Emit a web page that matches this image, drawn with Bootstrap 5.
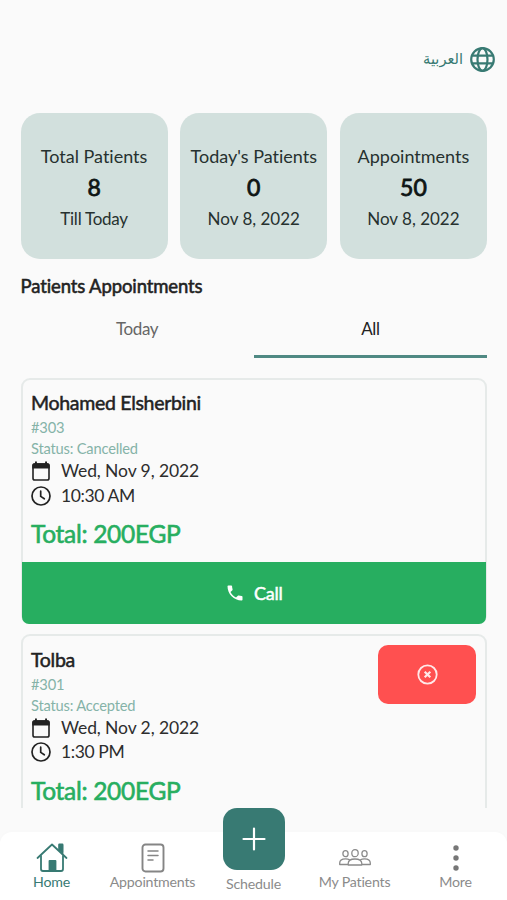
<!DOCTYPE html>
<html lang="en">
<head>
<meta charset="utf-8">
<meta name="viewport" content="width=device-width, initial-scale=1">
<title>Patients Appointments</title>
<link href="https://cdn.jsdelivr.net/npm/bootstrap@5.3.0/dist/css/bootstrap.min.css" rel="stylesheet">
<style>
:root{--teal:#387a73;--green:#27ae60;--mist:#d2e0dd}
body{font-family:Lato,"Liberation Sans",sans-serif;font-variant-ligatures:none;background:#fafafa;color:#222;height:900px;overflow:hidden}
.app-main{height:808px;padding:0 20px 0 20.5px}
.topbar{height:113.4px;padding-top:5px;margin-right:-8px;gap:7px}
.lang{font-family:"DejaVu Sans",sans-serif;font-size:14.6px;color:var(--teal);line-height:26px}
.stats{gap:12.5px}
.stat{background:var(--mist);border-radius:19px;height:146px;padding-top:27.5px;flex:1 1 0;white-space:nowrap}
.stat-name{font-size:18px;line-height:31px;color:#26312f}
.stat-num{font-size:23px;line-height:31px;font-weight:400;color:#0e1514;-webkit-text-stroke:.8px}
.stat-note{font-size:17px;line-height:31px;color:#26312f}
.stat-note.till{letter-spacing:-.25px}
.section-title{font-size:18.5px;line-height:28px;margin:13px 0 0;font-weight:400;letter-spacing:-.12px;-webkit-text-stroke:.55px}
.tab{height:58px;padding-top:14.5px;font-size:17px;line-height:28px;color:#666;letter-spacing:-.4px}
.tab.on{color:#222;border-bottom:3px solid #4f8983}
.appt{border:2px solid #e6eae9;border-radius:9px;white-space:nowrap}
.appt-body{padding:10.5px 10px 0 8.5px;height:182.5px}
.pname{font-size:19.5px;line-height:26px;letter-spacing:-.3px;-webkit-text-stroke:.5px;margin-bottom:.8px}
.meta{font-size:14.7px;line-height:21px;letter-spacing:-.2px;color:#85b3a8}
.when{font-size:17.5px;line-height:24.5px;height:24.5px;color:#2d2d2d;gap:10px;letter-spacing:-.1px}
.clock-time{letter-spacing:-.4px}
.total{font-size:24.5px;line-height:36px;letter-spacing:-.3px;color:var(--green);-webkit-text-stroke:.6px;margin-top:8px}
.call{background:var(--green);color:#fff;height:61.5px;border-radius:0 0 7px 7px;font-size:18px;gap:9px;-webkit-text-stroke:.5px;margin:0 -1px -1.5px;letter-spacing:-.2px}
.cancel{width:98px;height:58.5px;border-radius:10px;background:#ff5050;border:0;right:9px;top:9px}
.dock{height:68px;margin-top:24px;background:#fff;border-radius:12px 12px 0 0;box-shadow:0 -1px 5px rgba(0,0,0,.012);padding-left:1px}
.dock-item{width:101px;color:#8b8b8b;font-size:14.2px;line-height:20px;padding-top:7.7px;white-space:nowrap;letter-spacing:-.2px}
.dock-icon{height:32px}
.fab{width:62px;height:62px;border-radius:14px;background:var(--teal);top:-24px;left:50%;margin-left:-30.5px}
</style>
<script src="https://cdn.jsdelivr.net/npm/bootstrap@5.3.0/dist/js/bootstrap.bundle.min.js"></script>
</head>
<body>
<svg width="0" height="0" class="position-absolute">
  <symbol id="cal" viewBox="0 0 20 20"><rect x="2" y="3" width="16" height="16" rx="1.8" fill="none" stroke="#222" stroke-width="1.6"/><path d="M1.3 7.5V4.2Q1.3 2.3 3.2 2.3H4V.5h1.9v1.8h8.2V.5H16v1.8h.8q1.9 0 1.9 1.9v3.3z" fill="#222"/></symbol>
  <symbol id="clk" viewBox="0 0 20 20"><g fill="none" stroke="#222" stroke-width="1.7" stroke-linecap="round" stroke-linejoin="round"><circle cx="10" cy="10" r="9"/><path d="M9.7 5.2v5.2l3.6 2.4"/></g></symbol>
</svg>
<main class="app-main overflow-hidden">
  <header class="topbar d-flex align-items-center justify-content-end">
    <span class="lang" lang="ar" dir="rtl">العربية</span>
    <svg width="25" height="25" viewBox="0 0 25 25" fill="none" stroke="#387a73" stroke-width="2.2"><circle cx="12.5" cy="12.5" r="11.3"/><ellipse cx="12.5" cy="12.5" rx="5" ry="11.3"/><path d="M2 8.7h21M2 16.3h21"/></svg>
  </header>
  <section class="stats d-flex text-center">
    <div class="stat"><div class="stat-name">Total Patients</div><div class="stat-num">8</div><div class="stat-note till">Till Today</div></div>
    <div class="stat"><div class="stat-name">Today's Patients</div><div class="stat-num">0</div><div class="stat-note">Nov 8, 2022</div></div>
    <div class="stat"><div class="stat-name">Appointments</div><div class="stat-num">50</div><div class="stat-note">Nov 8, 2022</div></div>
  </section>
  <h1 class="section-title">Patients Appointments</h1>
  <div class="d-flex text-center">
    <div class="tab w-50">Today</div>
    <div class="tab on w-50">All</div>
  </div>
  <article class="appt" style="margin-top:19.5px">
    <div class="appt-body">
      <div class="pname">Mohamed Elsherbini</div>
      <div class="meta">#303</div>
      <div class="meta">Status: Cancelled</div>
      <div class="when d-flex align-items-center"><svg width="20" height="20"><use href="#cal"/></svg><span>Wed, Nov 9, 2022</span></div>
      <div class="when d-flex align-items-center"><svg width="20" height="20"><use href="#clk"/></svg><span class="clock-time">10:30 AM</span></div>
      <div class="total">Total: 200EGP</div>
    </div>
    <div class="call d-flex align-items-center justify-content-center"><svg width="20" height="20" viewBox="0 0 24 24" fill="#fff"><path d="M6.6 10.8c1.4 2.8 3.8 5.1 6.6 6.6l2.2-2.2c.3-.3.7-.4 1-.2 1.1.4 2.3.6 3.6.6.6 0 1 .4 1 1V20c0 .6-.4 1-1 1C10.6 21 3 13.4 3 4c0-.6.4-1 1-1h3.5c.6 0 1 .4 1 1 0 1.3.2 2.5.6 3.6.1.3 0 .7-.2 1z"/></svg><span>Call</span></div>
  </article>
  <article class="appt position-relative" style="margin-top:10px">
    <div class="appt-body">
      <div class="pname">Tolba</div>
      <div class="meta">#301</div>
      <div class="meta">Status: Accepted</div>
      <div class="when d-flex align-items-center"><svg width="20" height="20"><use href="#cal"/></svg><span>Wed, Nov 2, 2022</span></div>
      <div class="when d-flex align-items-center"><svg width="20" height="20"><use href="#clk"/></svg><span class="clock-time">1:30 PM</span></div>
      <div class="total">Total: 200EGP</div>
    </div>
    <button class="cancel position-absolute d-flex align-items-center justify-content-center" aria-label="Cancel"><svg width="21" height="21" viewBox="0 0 21 21" fill="none" stroke="#ffe9e9"><circle cx="10.5" cy="10.5" r="9.2" stroke-width="1.8"/><path d="M7.7 7.7l5.6 5.6M13.3 7.7l-5.6 5.6" stroke-width="2.2"/></svg></button>
  </article>
</main>
<nav class="dock d-flex position-relative text-center">
  <div class="dock-item" style="color:#387a73"><div class="dock-icon d-flex align-items-center justify-content-center pt-1"><svg width="32" height="31" viewBox="0 0 32 31" fill="none" stroke="#387a73" stroke-width="1.8" stroke-linejoin="round" stroke-linecap="round"><path d="M1.5 16L16 2.5 30.5 16"/><path d="M5 14v13q0 2 2 2h18q2 0 2-2V14M23.2 8V2.5h3.3v9"/><path d="M23.5 3h2.800v7l-2.800-2zM13.500 29V19h6v10z" fill="#387a73"/></svg></div>Home</div>
  <div class="dock-item"><div class="dock-icon d-flex align-items-center justify-content-center pt-1"><svg width="24" height="30" viewBox="0 0 24 30" fill="none" stroke="#858585" stroke-width="1.9" stroke-linecap="round"><rect x="1.5" y="1.5" width="21" height="27" rx="3"/><path d="M7 8h10M7 12.5h10M7 17h5" stroke-width="1.5"/></svg></div>Appointments</div>
  <div class="dock-item"><div class="fab position-absolute d-flex align-items-center justify-content-center"><svg width="24" height="24" viewBox="0 0 24 24" stroke="#fff" stroke-width="2.2" stroke-linecap="round"><path d="M12 1.5v21M1.5 12h21"/></svg></div><div class="dock-icon"></div><div style="padding-top:2px">Schedule</div></div>
  <div class="dock-item"><div class="dock-icon d-flex align-items-center justify-content-center pt-1"><svg width="32" height="17" viewBox="0 0 32 17" fill="none" stroke="#8b8b8b" stroke-width="1.3" stroke-linejoin="round"><ellipse cx="16" cy="4.2" rx="3.2" ry="3.5"/><ellipse cx="6.5" cy="4.7" rx="2.6" ry="3"/><ellipse cx="25.5" cy="4.7" rx="2.6" ry="3"/><path d="M9.200 16v-1.500c0-3 2.600-4.500 6.800-4.500s6.800 1.500 6.800 4.500V16zM9 15.500H.700V14c0-3 2.300-4.200 5.800-4.200 1.700 0 3 .3 4 1M23 15.500h8.300V14c0-3-2.300-4.200-5.800-4.200-1.700 0-3 .3-4 1"/></svg></div>My Patients</div>
  <div class="dock-item"><div class="dock-icon d-flex align-items-center justify-content-center pt-1"><svg width="6" height="26" viewBox="0 0 6 26" fill="#777"><circle cx="3" cy="3" r="2.7"/><circle cx="3" cy="13" r="2.7"/><circle cx="3" cy="23" r="2.7"/></svg></div>More</div>
</nav>
</body>
</html>
